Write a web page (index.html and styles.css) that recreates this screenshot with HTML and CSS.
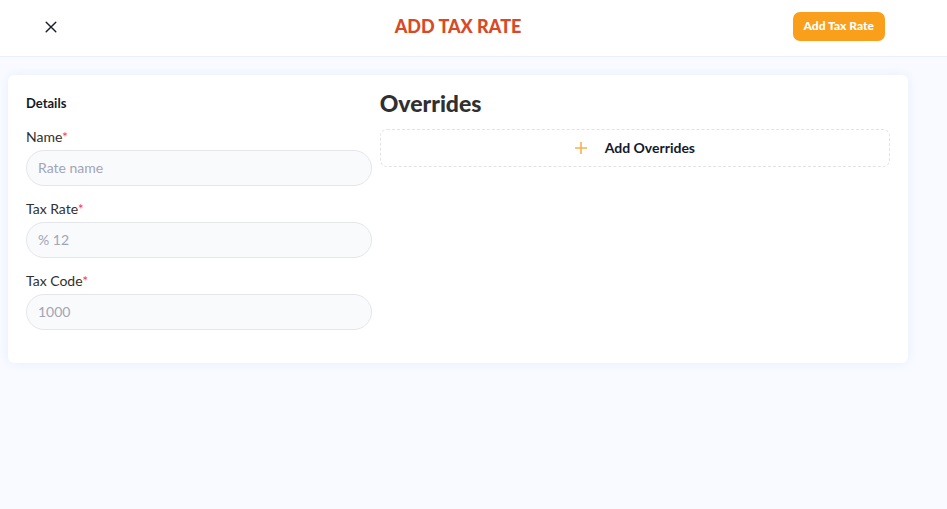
FILE: index.html
```html
<!DOCTYPE html>
<html lang="en">
<head>
<meta charset="utf-8">
<meta name="viewport" content="width=device-width, initial-scale=1">
<title>Add Tax Rate</title>
<link rel="stylesheet" href="styles.css">
</head>
<body>
<header class="topbar">
  <button class="close" type="button" aria-label="Close">
    <svg width="12" height="12" viewBox="0 0 12 12" fill="none" stroke="currentColor" stroke-width="1.4" stroke-linecap="round"><path d="M1.2 1.2l9.6 9.6M10.8 1.2l-9.6 9.6"/></svg>
  </button>
  <h1 class="title">ADD TAX RATE</h1>
  <button class="submit" type="submit" form="tax-form">Add Tax Rate</button>
</header>
<main class="page">
  <form class="card" id="tax-form">
    <section class="details">
      <h2 class="details-title">Details</h2>
      <div class="field">
        <label for="name">Name<span class="required">*</span></label>
        <input id="name" type="text" placeholder="Rate name">
      </div>
      <div class="field">
        <label for="rate">Tax Rate<span class="required">*</span></label>
        <input id="rate" type="text" placeholder="% 12">
      </div>
      <div class="field">
        <label for="code">Tax Code<span class="required">*</span></label>
        <input id="code" type="text" placeholder="1000">
      </div>
    </section>
    <section class="overrides">
      <h2 class="overrides-title">Overrides</h2>
      <button class="add" type="button">
        <svg width="12" height="12" viewBox="0 0 12 12" fill="none" stroke="#f9b04c" stroke-width="1.6"><path d="M6 0v12M0 6h12"/></svg>
        Add Overrides
      </button>
    </section>
  </form>
</main>
</body>
</html>
```

FILE: styles.css
```css
* {
  box-sizing: border-box;
}

body {
  margin: 0;
  min-height: 100vh;
  background: #f8faff;
  color: #303030;
  font: 14px/20px Lato, "Open Sans", sans-serif;
}

button,
input {
  font: inherit;
}

h1,
h2 {
  margin: 0;
}

.topbar {
  display: grid;
  grid-template-columns: 1fr auto 1fr;
  align-items: center;
  padding: 12px 62px 15px 31px;
  background: #fff;
  border-bottom: 1px solid #eaeffd;
}

.close {
  display: flex;
  justify-self: start;
  padding: 8px 14px;
  border: 0;
  background: none;
  color: #161c2d;
}

.title {
  padding-bottom: 2px;
  color: #d84a26;
  font-size: 18px;
  line-height: 26px;
  font-weight: 900;
}

.submit {
  justify-self: end;
  padding: 3px 11px 5px;
  border: 0;
  border-radius: 7px;
  background: #fa9f1c;
  color: #fff;
  font-size: 12px;
  line-height: 21px;
  font-weight: 900;
}

.page {
  padding: 18px 39px 18px 8px;
}

.card {
  display: grid;
  grid-template-columns: 21fr 31fr;
  gap: 8px;
  padding: 18px 18px 33px;
  border-radius: 6px;
  background: #fff;
  box-shadow: 0 0 10px #e7eefd;
}

.details-title {
  margin-bottom: 14px;
  color: #14192a;
  font-size: 13px;
  line-height: 20px;
  font-weight: 700;
}

.field + .field {
  margin-top: 13px;
}

.field label {
  display: block;
  margin-bottom: 3px;
}

.required {
  color: #f1416c;
}

.field input {
  display: block;
  width: 100%;
  height: 36px;
  padding: 0 11px 2px;
  border: 1px solid #e4e6ea;
  border-radius: 18px;
  background: #f9fafc;
  color: #303030;
}

.field input::placeholder {
  color: #a1a5b7;
  opacity: 1;
}

.overrides-title {
  margin-bottom: 16px;
  font-size: 23px;
  line-height: 20px;
  font-weight: 900;
}

.add {
  display: flex;
  align-items: center;
  justify-content: center;
  gap: 18px;
  width: 100%;
  height: 38px;
  border: 1px dashed #e2e3e6;
  border-radius: 7px;
  background: #fff;
  color: #14192a;
  font-weight: 700;
}
```
